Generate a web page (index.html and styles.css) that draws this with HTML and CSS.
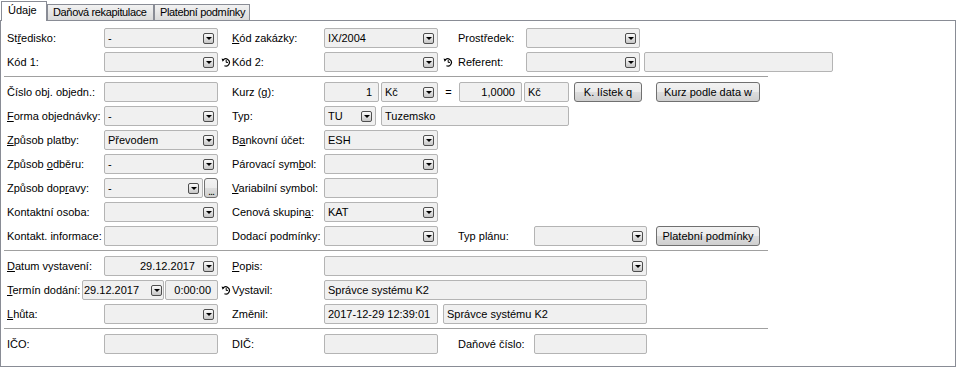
FILE: index.html
```html
<!DOCTYPE html>
<html lang="cs">
  <head>
    <meta charset="UTF-8" />
    <title>Údaje</title>
    <link rel="stylesheet" href="styles.css">
  </head>
  <body>
    <!-- Tab strip -->
    <div class="tabs">
      <div class="tab active t1">Údaje</div>
      <div class="tab t2">Daňová rekapitulace</div>
      <div class="tab t3">Platební podmínky</div>
    </div>

    <div class="panel">
      <!-- Header codes -->
      <div class="row">
        <span class="lbl c1">St<u>ř</u>edisko:</span>
        <div class="box w114">-<span class="drop"></span></div>
        <span class="sp14"></span>
        <span class="lbl c2"><u>K</u>ód zakázky:</span>
        <div class="box w114">IX/2004<span class="drop"></span></div>
        <span class="sp20"></span>
        <span class="lbl c3">Prostředek:</span>
        <div class="box w114"><span class="drop"></span></div>
      </div>
      <div class="row">
        <span class="lbl c1">Kód 1:</span>
        <div class="box w114"><span class="drop"></span></div>
        <span class="sp14 hist"><svg width="10" height="10" viewBox="0 0 10 10"><path d="M2 3.2 A3.6 3.6 0 1 1 3.4 8.8" fill="none" stroke="#000" stroke-width="1.2"/><path d="M0.6 1.6 L3.6 2.4 L1.6 4.8 Z" fill="#000"/><path d="M5.2 3 V5.4 H7" fill="none" stroke="#000" stroke-width="1"/></svg></span>
        <span class="lbl c2">Kód 2:</span>
        <div class="box w114"><span class="drop"></span></div>
        <span class="sp20 hist"><svg width="10" height="10" viewBox="0 0 10 10"><path d="M2 3.2 A3.6 3.6 0 1 1 3.4 8.8" fill="none" stroke="#000" stroke-width="1.2"/><path d="M0.6 1.6 L3.6 2.4 L1.6 4.8 Z" fill="#000"/><path d="M5.2 3 V5.4 H7" fill="none" stroke="#000" stroke-width="1"/></svg></span>
        <span class="lbl c3">Referent:</span>
        <div class="box w114"><span class="drop"></span></div>
        <div class="box w189 gap4"></div>
      </div>

      <div class="sep"></div>

      <!-- Order, currency and payment -->
      <div class="row">
        <span class="lbl c1">Číslo obj. objedn.:</span>
        <div class="box w114"></div>
        <span class="sp14"></span>
        <span class="lbl c2">Kurz (<u>g</u>):</span>
        <div class="box num w55">1</div>
        <div class="box w57 gap2">Kč<span class="drop"></span></div>
        <span class="eq">=</span>
        <div class="box num w63">1,0000</div>
        <div class="box w45 gap2">Kč</div>
        <button class="btn w68 gap5">K. lístek q</button>
        <button class="btn w104 gap14">Kurz podle data w</button>
      </div>
      <div class="row">
        <span class="lbl c1"><u>F</u>orma objednávky:</span>
        <div class="box w114">-<span class="drop"></span></div>
        <span class="sp14"></span>
        <span class="lbl c2">Typ:</span>
        <div class="box w52">TU<span class="drop"></span></div>
        <div class="box w188 gap5">Tuzemsko</div>
      </div>
      <div class="row">
        <span class="lbl c1"><u>Z</u>působ platby:</span>
        <div class="box w114">Převodem<span class="drop"></span></div>
        <span class="sp14"></span>
        <span class="lbl c2">B<u>a</u>nkovní účet:</span>
        <div class="box w114">ESH<span class="drop"></span></div>
      </div>
      <div class="row">
        <span class="lbl c1">Způsob <u>o</u>dběru:</span>
        <div class="box w114">-<span class="drop"></span></div>
        <span class="sp14"></span>
        <span class="lbl c2">Párovací sym<u>b</u>ol:</span>
        <div class="box w114"><span class="drop"></span></div>
      </div>
      <div class="row">
        <span class="lbl c1">Způsob dop<u>r</u>avy:</span>
        <div class="box w99">-<span class="drop"></span></div>
        <button class="btn dots gap1">...</button>
        <span class="sp14"></span>
        <span class="lbl c2"><u>V</u>ariabilní symbol:</span>
        <div class="box w114"></div>
      </div>
      <div class="row">
        <span class="lbl c1">Kontaktní osoba:</span>
        <div class="box w114"><span class="drop"></span></div>
        <span class="sp14"></span>
        <span class="lbl c2">Cenová skupin<u>a</u>:</span>
        <div class="box w114">KAT<span class="drop"></span></div>
      </div>
      <div class="row">
        <span class="lbl c1">Kontakt. informace:</span>
        <div class="box w114"></div>
        <span class="sp14"></span>
        <span class="lbl c2">Dodací podmínky:</span>
        <div class="box w114"><span class="drop"></span></div>
        <span class="sp20"></span>
        <span class="lbl c3w">Typ plánu:</span>
        <div class="box w113"><span class="drop"></span></div>
        <button class="btn w104 gap9">Platební podmínky</button>
      </div>

      <div class="sep"></div>

      <!-- Dates and authors -->
      <div class="row">
        <span class="lbl c1"><u>D</u>atum vystavení:</span>
        <div class="box date w114"><span>29.12.2017</span><span class="drop"></span></div>
        <span class="sp14"></span>
        <span class="lbl c2"><u>P</u>opis:</span>
        <div class="box w323"><span class="drop"></span></div>
      </div>
      <div class="row">
        <span class="lbl c1s"><u>T</u>ermín dodání:</span>
        <div class="box tight w82">29.12.2017<span class="drop"></span></div>
        <div class="box num w53 gap1">0:00:00</div>
        <span class="sp14 hist"><svg width="10" height="10" viewBox="0 0 10 10"><path d="M2 3.2 A3.6 3.6 0 1 1 3.4 8.8" fill="none" stroke="#000" stroke-width="1.2"/><path d="M0.6 1.6 L3.6 2.4 L1.6 4.8 Z" fill="#000"/><path d="M5.2 3 V5.4 H7" fill="none" stroke="#000" stroke-width="1"/></svg></span>
        <span class="lbl c2">Vystavil:</span>
        <div class="box w323">Správce systému K2</div>
      </div>
      <div class="row">
        <span class="lbl c1"><u>L</u>hůta:</span>
        <div class="box w114"><span class="drop"></span></div>
        <span class="sp14"></span>
        <span class="lbl c2">Změnil:</span>
        <div class="box w114">2017-12-29 12:39:01</div>
        <div class="box w204 gap5">Správce systému K2</div>
      </div>

      <div class="sep"></div>

      <!-- Tax ids -->
      <div class="row">
        <span class="lbl c1">IČO:</span>
        <div class="box w114"></div>
        <span class="sp14"></span>
        <span class="lbl c2">DIČ:</span>
        <div class="box w114"></div>
        <span class="sp20"></span>
        <span class="lbl c3w">Daňové číslo:</span>
        <div class="box w113"></div>
      </div>
    </div>
  </body>
</html>
```

FILE: styles.css
```css
/* Reset and base font */
* {
  margin: 0;
  padding: 0;
  box-sizing: border-box;
}

body {
  background-color: #fff;
  color: #000;
  font-family: 'Liberation Sans', Arial, sans-serif;
  font-size: 11px;
}

u {
  text-underline-offset: 1px;
}

/* Tab strip */
.tabs {
  display: flex;
  align-items: flex-end;
  height: 20px;
  padding-left: 1px;
  position: relative;
  z-index: 2;
}

.tab {
  height: 16px;
  padding: 0 0 0 5px;
  border: 1px solid #898c95;
  border-bottom: none;
  background: linear-gradient(#f2f2f2, #dadada);
  line-height: 15px;
  letter-spacing: -0.35px;
  white-space: nowrap;
  overflow: hidden;
}

.tab.active {
  height: 20px;
  margin-bottom: -1px;
  padding-left: 6px;
  background: #fff;
  line-height: 16px;
  letter-spacing: 0;
}

.t1 { width: 46px; }
.t2 { width: 107px; }
.t3 { width: 96px; }

/* Main panel */
.panel {
  width: 956px;
  height: 347px;
  border: 1px solid #898c95;
  padding: 7px 0 0 6px;
}

.row {
  display: flex;
  align-items: center;
  height: 20px;
  margin-bottom: 4px;
  white-space: nowrap;
}

.sep {
  height: 1px;
  width: 764px;
  margin: 2px 0 5px -3px;
  background-color: #a0a0a0;
}

/* Labels */
.lbl {
  flex: none;
}

.c1 { width: 97px; }
.c1s { width: 75px; }
.c2 { width: 92px; }
.c3 { width: 68px; }
.c3w { width: 76px; }

/* Spacers between columns */
.sp14,
.sp20 {
  flex: none;
  display: flex;
  align-items: center;
  height: 20px;
}

.sp14 { width: 14px; }
.sp20 { width: 20px; }

.sp14.hist { padding-left: 3px; }
.sp20.hist { padding-left: 5px; }

/* Inputs and combo boxes */
.box {
  flex: none;
  display: flex;
  align-items: center;
  height: 20px;
  padding: 0 3px;
  border: 1px solid #b4b4b4;
  border-radius: 2px;
  background-color: #f0f0f0;
  overflow: hidden;
}

.box.num {
  justify-content: flex-end;
  padding-right: 6px;
}

.box.date span:first-child {
  margin-left: auto;
  margin-right: 8px;
}

.box.date .drop {
  margin-left: 0;
}

.box.tight {
  padding: 0 1px;
}

.drop {
  flex: none;
  position: relative;
  width: 11px;
  height: 11px;
  margin-left: auto;
  border: 1px solid #4f4f4f;
  border-radius: 2px;
  background: linear-gradient(#fbfbfb, #c6c6c6);
}

.drop::after {
  content: '';
  position: absolute;
  left: 2px;
  top: 3px;
  border-left: 3px solid transparent;
  border-right: 3px solid transparent;
  border-top: 3px solid #000;
}

.eq {
  flex: none;
  width: 21px;
  text-align: center;
}

/* Push buttons */
.btn {
  flex: none;
  height: 20px;
  border: 1px solid #707070;
  border-radius: 3px;
  background: linear-gradient(#f2f2f2 0%, #ebebeb 50%, #dddddd 50%, #cfcfcf 100%);
  font-family: inherit;
  font-size: 11px;
  color: #000;
  text-align: center;
}

.btn.dots {
  width: 14px;
  padding-top: 6px;
  line-height: 10px;
  letter-spacing: -1px;
}

/* Widths */
.w45 { width: 45px; }
.w52 { width: 52px; }
.w53 { width: 53px; }
.w55 { width: 55px; }
.w57 { width: 57px; }
.w63 { width: 63px; }
.w68 { width: 68px; }
.w82 { width: 82px; }
.w99 { width: 99px; }
.w104 { width: 104px; }
.w113 { width: 113px; }
.w114 { width: 114px; }
.w188 { width: 188px; }
.w189 { width: 189px; }
.w204 { width: 204px; }
.w323 { width: 323px; }

/* Gaps before an item */
.gap1 { margin-left: 1px; }
.gap2 { margin-left: 2px; }
.gap4 { margin-left: 4px; }
.gap5 { margin-left: 5px; }
.gap9 { margin-left: 9px; }
.gap14 { margin-left: 14px; }
```
